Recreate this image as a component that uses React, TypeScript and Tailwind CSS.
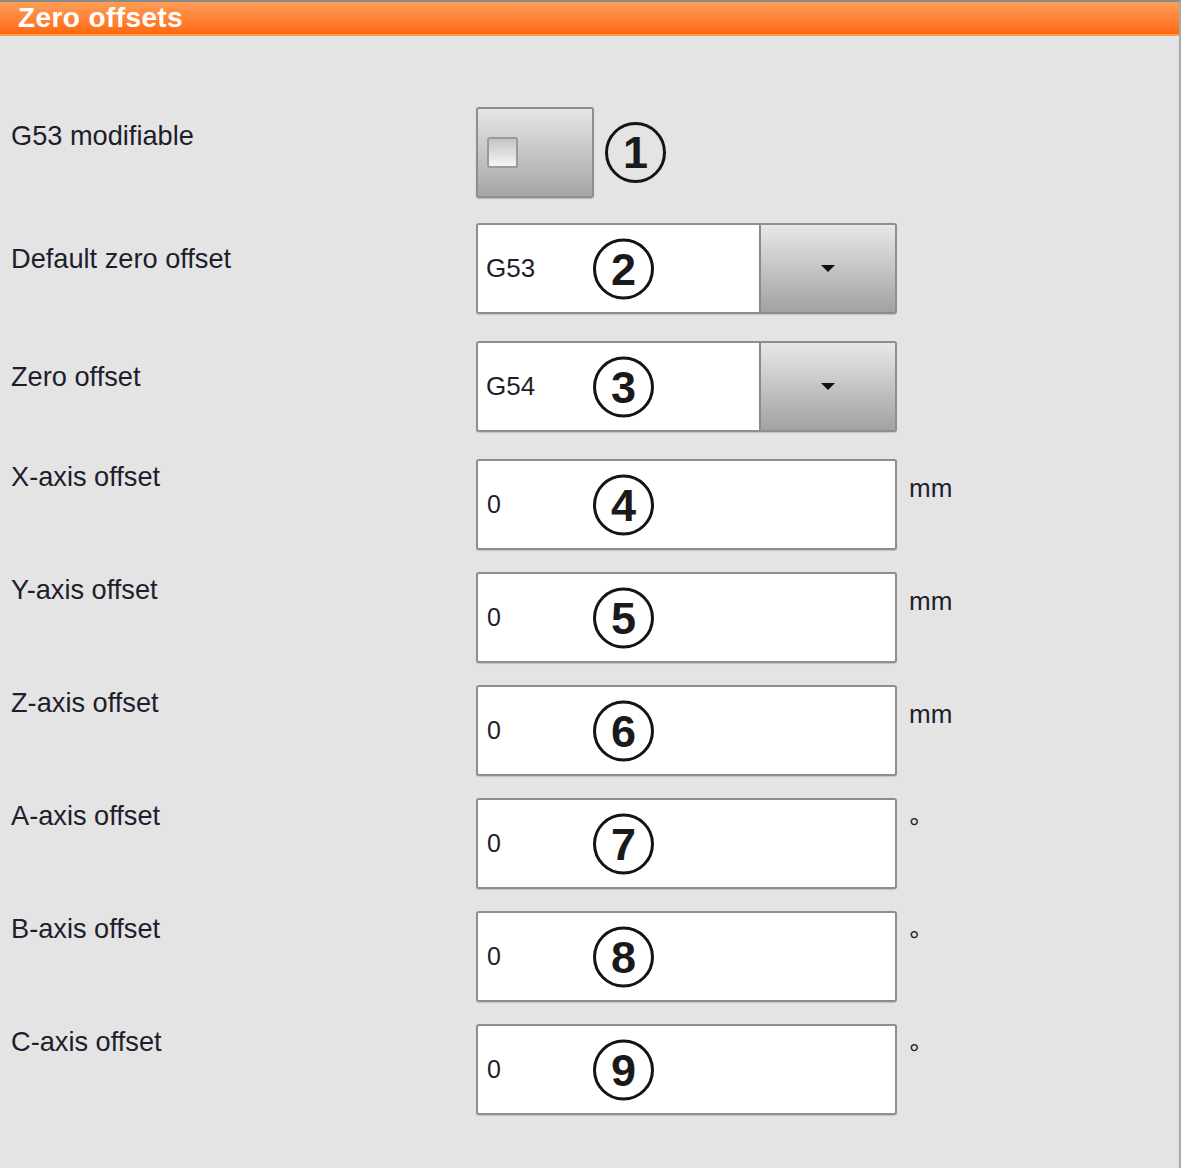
import React from "react";

const FONT = { fontFamily: '"Liberation Sans", Arial, sans-serif' };

function Circle({ n }: { n: number }) {
  return (
    <div className="w-[61px] h-[61px] rounded-full border-[3px] border-[#141414] flex items-center justify-center text-[45px] font-bold leading-none text-[#1a1a1a]">
      {n}
    </div>
  );
}

function Label({ text, pt }: { text: string; pt: string }) {
  return (
    <div className={`w-[465px] shrink-0 text-[27.2px] leading-[30px] text-[#1e1e2c] ${pt}`}>{text}</div>
  );
}

function Dropdown({ value, n }: { value: string; n: number }) {
  return (
    <div className="relative flex w-[421px] h-[91px] rounded-[3px] border-2 border-[#8e8e8e] bg-white overflow-hidden shadow-[0_1px_1px_rgba(0,0,0,0.15)]">
      <div className="flex-1 flex items-center pl-[8px] text-[26px] text-[#1e1e2c]">{value}</div>
      <div className="w-[136px] h-full border-l-2 border-[#8a8a8a] bg-gradient-to-b from-[#e8e8e8] to-[#a2a2a2] flex items-center justify-center">
        <svg width="16" height="9" viewBox="0 0 16 9">
          <polygon points="1,1 15,1 8,8" fill="#111" />
        </svg>
      </div>
      <div className="absolute left-[115px] top-1/2 -translate-y-1/2">
        <Circle n={n} />
      </div>
    </div>
  );
}

function NumInput({ n }: { n: number }) {
  return (
    <div className="relative flex items-center w-[421px] h-[91px] rounded-[3px] border-2 border-[#8e8e8e] bg-white pl-[9px] text-[25px] text-[#1e1e2c] shadow-[0_1px_1px_rgba(0,0,0,0.15)]">
      0
      <div className="absolute left-[115px] top-1/2 -translate-y-1/2">
        <Circle n={n} />
      </div>
    </div>
  );
}

export default function App() {
  const axes = [
    { label: "X-axis offset", unit: "mm", n: 4 },
    { label: "Y-axis offset", unit: "mm", n: 5 },
    { label: "Z-axis offset", unit: "mm", n: 6 },
    { label: "A-axis offset", unit: "°", n: 7 },
    { label: "B-axis offset", unit: "°", n: 8 },
    { label: "C-axis offset", unit: "°", n: 9 },
  ];
  return (
    <div
      style={FONT}
      className="w-[1181px] h-[1168px] bg-[#e4e4e4] border-t-2 border-t-[#8a8a8a] border-r-2 border-r-[#a8a8a8] overflow-hidden"
    >
      <div className="h-[34px] bg-gradient-to-b from-[#ff9d55] to-[#ff6808] border-b-2 border-[#ff9a52] pl-[18px] text-white font-bold text-[28px] leading-[32px] tracking-[0.4px]">
        Zero offsets
      </div>

      <div className="pl-[11px] pt-[71px] flex flex-col">
        {/* Row 1 */}
        <div className="flex">
          <Label text="G53 modifiable" pt="pt-[14px]" />
          <div className="w-[118px] h-[91px] rounded-[3px] border-2 border-[#8e8e8e] bg-gradient-to-b from-[#e6e6e6] to-[#a6a6a6] flex items-center pl-[9px] shadow-[0_1px_1px_rgba(0,0,0,0.2)]">
            <div className="w-[31px] h-[31px] rounded-[3px] border-2 border-[#9a9a9a] bg-gradient-to-b from-[#c4c4c4] to-[#f6f6f6]" />
          </div>
          <div className="ml-[11px] self-center">
            <Circle n={1} />
          </div>
        </div>

        {/* Row 2 */}
        <div className="flex mt-[25px]">
          <Label text="Default zero offset" pt="pt-[21px]" />
          <Dropdown value="G53" n={2} />
        </div>

        {/* Row 3 */}
        <div className="flex mt-[27px]">
          <Label text="Zero offset" pt="pt-[21px]" />
          <Dropdown value="G54" n={3} />
        </div>

        {axes.map((a, i) => (
          <div key={a.label} className={`flex ${i === 0 ? "mt-[27px]" : "mt-[22px]"}`}>
            <Label text={a.label} pt="pt-[3px]" />
            <NumInput n={a.n} />
            <div className="ml-[12px] pt-[14px] text-[26px] leading-[30px] text-[#1e1e2c]">{a.unit}</div>
          </div>
        ))}
      </div>
    </div>
  );
}
